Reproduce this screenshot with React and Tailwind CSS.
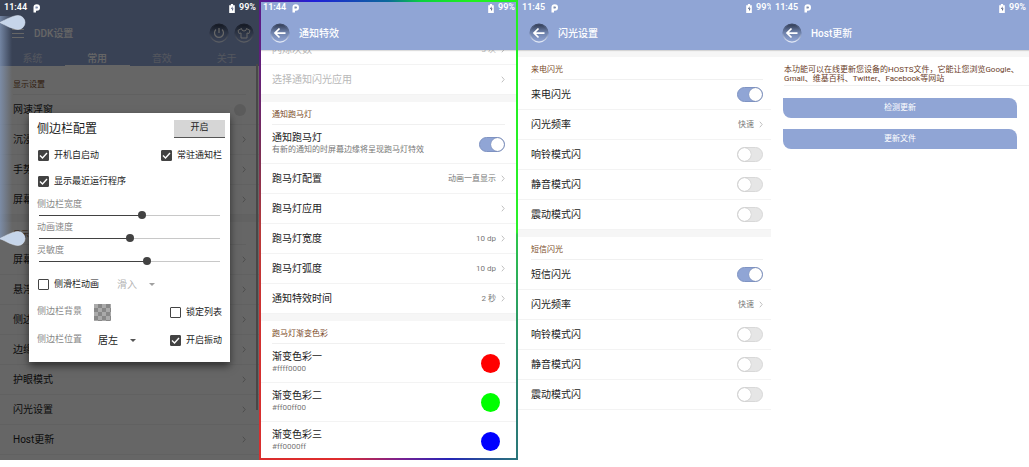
import { useState } from "react";
import clsx from "clsx";

const COMMON_TOP = ["沉浸模式", "手势设置", "屏幕设置"];
const COMMON_BOTTOM = ["屏幕边框", "悬浮菜单", "侧边栏配置", "边缘手势", "护眼模式", "闪光设置", "Host更新"];
const TABS = ["系统", "常用", "音效", "关于"];

const MARQUEE_ROWS = [
  { title: "跑马灯配置", value: "动画一直显示" },
  { title: "跑马灯应用" },
  { title: "跑马灯宽度", value: "10 dp" },
  { title: "跑马灯弧度", value: "10 dp" },
  { title: "通知特效时间", value: "2 秒" },
];

const COLORS = [
  { title: "渐变色彩一", hex: "#ffff0000", fill: "bg-[#ff0000]" },
  { title: "渐变色彩二", hex: "#ff00ff00", fill: "bg-[#00ff00]" },
  { title: "渐变色彩三", hex: "#ff0000ff", fill: "bg-[#0000ff]" },
];

const FLASH_MODES = ["响铃模式闪", "静音模式闪", "震动模式闪"];

function StatusBar({ time }) {
  return (
    <div className="relative z-20 flex h-4 items-center justify-between pr-[3px] pl-1 text-[9px] font-semibold text-white">
      <span className="flex items-center gap-[6px]">
        {time}
        <svg viewBox="0 0 14 18" className="h-[9px] w-[7px]" aria-hidden="true">
          <path d="M1 17V7a6.500 6.500 0 1 1 6.500 6.500H6V17z" fill="currentColor" />
          <path d="M5 9V5h3a2 2 0 0 1 0 4z" fill="#7c8cae" />
        </svg>
      </span>
      <span className="flex items-center gap-1">
        <svg viewBox="0 0 10 16" className="h-[9px] w-[6px]" aria-hidden="true">
          <path d="M3 0h4v2h3v14H0V2h3z" fill="currentColor" />
          <path d="M6 4 3 9h2v4l3-5H6z" fill="#5d6a8a" />
        </svg>
        99%
      </span>
    </div>
  );
}

// Round recessed button, shaded from the top with a light lower rim
function RoundButton({ label, id, children }) {
  return (
    <button aria-label={label} className="size-5 shrink-0 text-white">
      <svg viewBox="0 0 40 40" className="size-5">
        <defs>
          <linearGradient id={`${id}-fill`} x1="0" y1="0" x2="0" y2="1">
            <stop offset="0" stopColor="#2f3950" />
            <stop offset="0.45" stopColor="#6c7fa8" />
            <stop offset="1" stopColor="#90a5d5" />
          </linearGradient>
          <linearGradient id={`${id}-rim`} x1="0" y1="0" x2="0" y2="1">
            <stop offset="0" stopColor="#3c4864" />
            <stop offset="0.5" stopColor="#6f82ab" />
            <stop offset="1" stopColor="#e6ecf8" />
          </linearGradient>
        </defs>
        <circle cx="20" cy="20" r="18" fill={`url(#${id}-fill)`} stroke={`url(#${id}-rim)`} strokeWidth="2.500" />
        {children}
      </svg>
    </button>
  );
}

function BackHeader({ time, title, id }) {
  return (
    <header className="relative z-10 h-[50px] bg-[#90a5d5] shadow-[0_1px_1px_#0002]">
      <StatusBar time={time} />
      <div className="flex h-[34px] items-center gap-[9px] px-[11px]">
        <RoundButton label="返回" id={id}>
          <path d="M31 20H10M19 11l-9 9 9 9" fill="none" stroke="white" strokeWidth="3.500" />
        </RoundButton>
        <h1 className="text-[10px] font-medium text-white">{title}</h1>
      </div>
    </header>
  );
}

function Chevron() {
  return (
    <svg viewBox="0 0 5 8" className="h-[7px] w-1 shrink-0" aria-hidden="true">
      <path d="m1 0.500 3 3.500-3 3.500" fill="none" stroke="#a8a8a8" strokeWidth="0.900" />
    </svg>
  );
}

function Band() {
  return <div className="h-[7px] bg-[#f6f6f6]" />;
}

function SectionLabel({ children, tall }) {
  return (
    <h2
      className={clsx(
        "mx-[13px] flex items-center border-b border-[#f0f0f0] text-[8px] text-[#7a4a28]",
        tall ? "h-[29px] pt-[10px]" : "h-[23px] pt-1"
      )}
    >
      {children}
    </h2>
  );
}

function LinkRow({ title, value, disabled }) {
  return (
    <button
      disabled={disabled}
      className={clsx(
        "flex h-[30px] w-full items-center justify-between border-b border-[#f3f3f3] px-[13px] text-left text-[10px]",
        disabled ? "text-[#b8b8b8]" : "text-[#222]"
      )}
    >
      <span>{title}</span>
      <span className={clsx("flex items-center gap-[5px] text-[8px]", disabled ? "text-[#c0c0c0]" : "text-[#777]")}>
        {value}
        <Chevron />
      </span>
    </button>
  );
}

function SwitchRow({ title, note, on = false }) {
  const [checked, setChecked] = useState(on);
  return (
    <label
      className={clsx(
        "flex items-center justify-between border-b border-[#f3f3f3] px-[13px] text-[10px] text-[#222]",
        note ? "h-[39px]" : "h-[30px]"
      )}
    >
      <span className="leading-3">
        {title}
        {note && <span className="block text-[8px] text-[#777]">{note}</span>}
      </span>
      <input
        type="checkbox"
        role="switch"
        checked={checked}
        onChange={(e) => setChecked(e.target.checked)}
        className="flex h-[15px] w-[26px] shrink-0 appearance-none items-center rounded-full border border-[#d8d8d8] bg-[#e6e6e6] before:size-[13px] before:rounded-full before:bg-white before:shadow-[0_0_1px_#0005] checked:justify-end checked:border-[#7f93c2] checked:bg-[#90a5d5]"
      />
    </label>
  );
}

function Check({ label, on = false }) {
  const [checked, setChecked] = useState(on);
  return (
    <label className="flex items-center gap-[5px] text-[9px] leading-3 text-[#222]">
      <span className="grid size-[11px]">
        <input
          type="checkbox"
          checked={checked}
          onChange={(e) => setChecked(e.target.checked)}
          className="col-start-1 row-start-1 size-[11px] appearance-none rounded-[1px] border border-[#444] bg-white checked:bg-[#424242]"
        />
        {checked && (
          <svg viewBox="0 0 11 11" className="pointer-events-none col-start-1 row-start-1" aria-hidden="true">
            <path d="m2 5.500 2.500 2.500L9 3" fill="none" stroke="white" strokeWidth="1.400" />
          </svg>
        )}
      </span>
      {label}
    </label>
  );
}

function Slider({ label, initial }) {
  const [value, setValue] = useState(initial);
  return (
    <label className="block h-[23px] text-[9px] leading-3 text-[#888]">
      {label}
      <input
        type="range"
        value={value}
        onChange={(e) => setValue(Number(e.target.value))}
        className="mx-[2px] block h-[10px] w-[calc(100%-4px)] appearance-none bg-[length:100%_1px] bg-center bg-no-repeat [&::-webkit-slider-thumb]:size-2 [&::-webkit-slider-thumb]:appearance-none [&::-webkit-slider-thumb]:rounded-full [&::-webkit-slider-thumb]:bg-[#424242]"
        style={{ backgroundImage: `linear-gradient(to right, #424242 ${value}%, #c8c8c8 ${value}%)` }}
      />
    </label>
  );
}

function Picker({ label, options, disabled }) {
  return (
    <span className={clsx("flex items-center gap-3 text-[10px]", disabled ? "text-[#b5b5b5]" : "text-[#222]")}>
      <select aria-label={label} disabled={disabled} className="w-5 appearance-none opacity-100">
        {options.map((option) => (
          <option key={option}>{option}</option>
        ))}
      </select>
      <svg viewBox="0 0 6 3" className="h-[3px] w-[6px]" aria-hidden="true">
        <path d="M0 0h6L3 3z" fill={disabled ? "#a0a0a0" : "#555"} />
      </svg>
    </span>
  );
}

function SidebarDialog() {
  return (
    <div
      role="dialog"
      aria-label="侧边栏配置"
      className="w-full bg-white px-2 pt-[7px] pb-2 shadow-[0_4px_8px_#0008]"
    >
      <div className="flex h-[17px] items-center justify-between">
        <h2 className="text-[12px] text-[#222]">侧边栏配置</h2>
        <button className="-mr-[3px] h-[18px] w-[51px] border-b border-[#555] bg-[#d6d6d6] text-[9px] text-[#222]">
          开启
        </button>
      </div>
      <div className="mt-[5px] flex h-[26px] items-center justify-between pl-px">
        <Check label="开机自启动" on />
        <Check label="常驻通知栏" on />
      </div>
      <div className="flex h-[26px] items-center pl-px">
        <Check label="显示最近运行程序" on />
      </div>
      <div className="mt-1">
        <Slider label="侧边栏宽度" initial={57} />
        <Slider label="动画速度" initial={50} />
        <Slider label="灵敏度" initial={60} />
      </div>
      <div className="mt-[3px] flex h-7 items-center gap-[18px] pl-px">
        <Check label="侧滑栏动画" />
        <Picker label="滑入" options={["滑入"]} disabled />
      </div>
      <div className="flex h-7 items-center text-[9px] text-[#888]">
        <span>侧边栏背景</span>
        <button
          aria-label="侧边栏背景"
          className="ml-3 size-[17px] bg-[conic-gradient(#888_25%,#aaa_0_50%,#888_0_75%,#aaa_0)] bg-[length:8px_8px]"
        />
        <span className="ml-auto">
          <Check label="锁定列表" />
        </span>
      </div>
      <div className="flex h-7 items-center text-[9px] text-[#888]">
        <span className="mr-4">侧边栏位置</span>
        <Picker label="侧边栏位置" options={["居左", "居右"]} />
        <span className="ml-auto">
          <Check label="开启振动" on />
        </span>
      </div>
    </div>
  );
}

function EdgeHandle({ className }) {
  return (
    <svg viewBox="0 0 52 30" className={clsx("absolute left-0 z-20 h-[15px] w-[26px]", className)} aria-hidden="true">
      <path d="M0 15C12 9 26 1 36 1a14 14 0 0 1 0 28C26 29 12 21 0 15z" fill="#c6d5ea" stroke="#e3ebf6" />
    </svg>
  );
}

function CommonScreen() {
  return (
    <section className="relative overflow-hidden bg-white">
      <header className="bg-[#90a5d5]">
        <StatusBar time="11:44" />
        <div className="flex h-[34px] items-center pr-[5px] pl-3 text-white">
          <button aria-label="菜单" className="flex w-3 flex-col gap-[3px]">
            <span className="h-px bg-white" />
            <span className="h-px bg-white" />
            <span className="h-px bg-white" />
          </button>
          <h1 className="ml-[10px] flex-1 text-[10px] font-medium">DDK设置</h1>
          <span className="flex gap-[5px]">
            <RoundButton label="电源" id="power">
              <path d="M20 10v10M14 13a9 9 0 1 0 12 0" fill="none" stroke="white" strokeWidth="2.500" />
            </RoundButton>
            <RoundButton label="主题" id="theme">
              <path
                d="m15 11-7 4 2 6 4-1v10h12V20l4 1 2-6-7-4a5 5 0 0 1-10 0z"
                fill="none"
                stroke="white"
                strokeWidth="2"
              />
            </RoundButton>
          </span>
        </div>
        <nav className="grid h-4 grid-cols-4">
          {TABS.map((tab) => (
            <button
              key={tab}
              className={clsx(
                "border-b pt-[2px] text-[10px] leading-3",
                tab === "常用" ? "border-white font-medium text-white" : "border-transparent text-[#d0d8ea]"
              )}
            >
              {tab}
            </button>
          ))}
        </nav>
      </header>
      <SectionLabel tall>显示设置</SectionLabel>
      <label className="flex h-[30px] items-center justify-between border-b border-[#f3f3f3] px-[13px] text-[10px] text-[#222]">
        网速浮窗
        <input type="checkbox" className="size-3 appearance-none rounded-full bg-[#e4e4e4]" />
      </label>
      {COMMON_TOP.map((title) => (
        <LinkRow key={title} title={title} />
      ))}
      <Band />
      <SectionLabel>显示设置</SectionLabel>
      {COMMON_BOTTOM.map((title) => (
        <LinkRow key={title} title={title} />
      ))}

      {/* Dimmed backdrop with the dialog on top */}
      <div className="absolute inset-0 z-10 flex items-center justify-center bg-black/60 px-[29px] pt-[15px]">
        <SidebarDialog />
      </div>

      {/* Edge glow, its drag handles and the scroll thumb */}
      <div className="absolute top-4 left-0 z-10 h-56 w-3 bg-linear-to-r from-[#8195b5]/80 to-transparent" />
      <EdgeHandle className="top-[15px]" />
      <EdgeHandle className="top-[231px]" />
      <div className="absolute top-16 right-px z-10 h-[346px] w-[2px] bg-[#484848]" />
    </section>
  );
}

function NotificationScreen() {
  return (
    <section className="relative overflow-hidden bg-white">
      <BackHeader time="11:44" title="通知特效" id="notify" />
      <div className="-mt-[15px]">
        <LinkRow title="闪烁次数" value="3 次" disabled />
      </div>
      <LinkRow title="选择通知闪光应用" disabled />
      <Band />
      <SectionLabel>通知跑马灯</SectionLabel>
      <SwitchRow title="通知跑马灯" note="有新的通知的时屏幕边缘将呈现跑马灯特效" on />
      {MARQUEE_ROWS.map((row) => (
        <LinkRow key={row.title} {...row} />
      ))}
      <Band />
      <SectionLabel>跑马灯渐变色彩</SectionLabel>
      <div className="-mb-px">
        {COLORS.map((color) => (
          <button
            key={color.hex}
            className="flex h-[39px] w-full items-center justify-between border-b border-[#f3f3f3] pr-[18px] pl-[13px] text-left text-[10px] leading-3 text-[#222]"
          >
            <span>
              {color.title}
              <span className="block text-[8px] text-[#777]">{color.hex}</span>
            </span>
            <span className={clsx("size-[19px] rounded-full", color.fill)} />
          </button>
        ))}
      </div>

      {/* Marquee light that runs round the screen edge */}
      <div className="pointer-events-none absolute inset-0 z-30 border-2 [border-image:conic-gradient(#0a6a9a_0deg,#0ad040_8deg,#20f020_20deg,#2af02a_91deg,#2cc84a_92deg,#2a7878_150deg,#2525b8_165deg,#7a2090_177deg,#e02c2c_192deg,#d03030_235deg,#b83a3a_270deg,#7a2d55_302deg,#5a1a88_330deg,#2020d8_342deg,#0a6a9a_360deg)_2]" />
    </section>
  );
}

function FlashSection({ title }) {
  return (
    <>
      <SectionLabel>{title}</SectionLabel>
      <SwitchRow title={title} on />
      <LinkRow title="闪光频率" value="快速" />
      {FLASH_MODES.map((mode) => (
        <SwitchRow key={mode} title={mode} />
      ))}
    </>
  );
}

function FlashScreen() {
  return (
    <section className="overflow-hidden bg-white">
      <div className="w-[102%]">
        <BackHeader time="11:45" title="闪光设置" id="flash" />
        <Band />
        <FlashSection title="来电闪光" />
        <Band />
        <FlashSection title="短信闪光" />
      </div>
    </section>
  );
}

function HostScreen() {
  return (
    <section className="overflow-hidden bg-white">
      <BackHeader time="11:45" title="Host更新" id="host" />
      <Band />
      <p className="ml-[13px] border-b border-[#f0f0f0] pt-2 pb-[2px] text-[8px] leading-[9px] text-[#6b4028]">
        本功能可以在线更新您设备的HOSTS文件，它能让您浏览Google、
        <br />
        Gmail、维基百科、Twitter、Facebook等网站
      </p>
      <div className="flex flex-col gap-[11px] px-3 pt-3">
        <button className="h-5 rounded-tr-lg rounded-bl-lg bg-[#90a5d5] text-[8px] text-white">检测更新</button>
        <button className="h-5 rounded-tr-lg rounded-bl-lg bg-[#90a5d5] text-[8px] text-white">更新文件</button>
      </div>
    </section>
  );
}

export default function App() {
  return (
    <main className="grid min-h-screen grid-cols-[259fr_259fr_253fr_258fr] bg-white pb-[7px] font-[Roboto,'Noto_Sans_CJK_SC',sans-serif]">
      <CommonScreen />
      <NotificationScreen />
      <FlashScreen />
      <HostScreen />
    </main>
  );
}
